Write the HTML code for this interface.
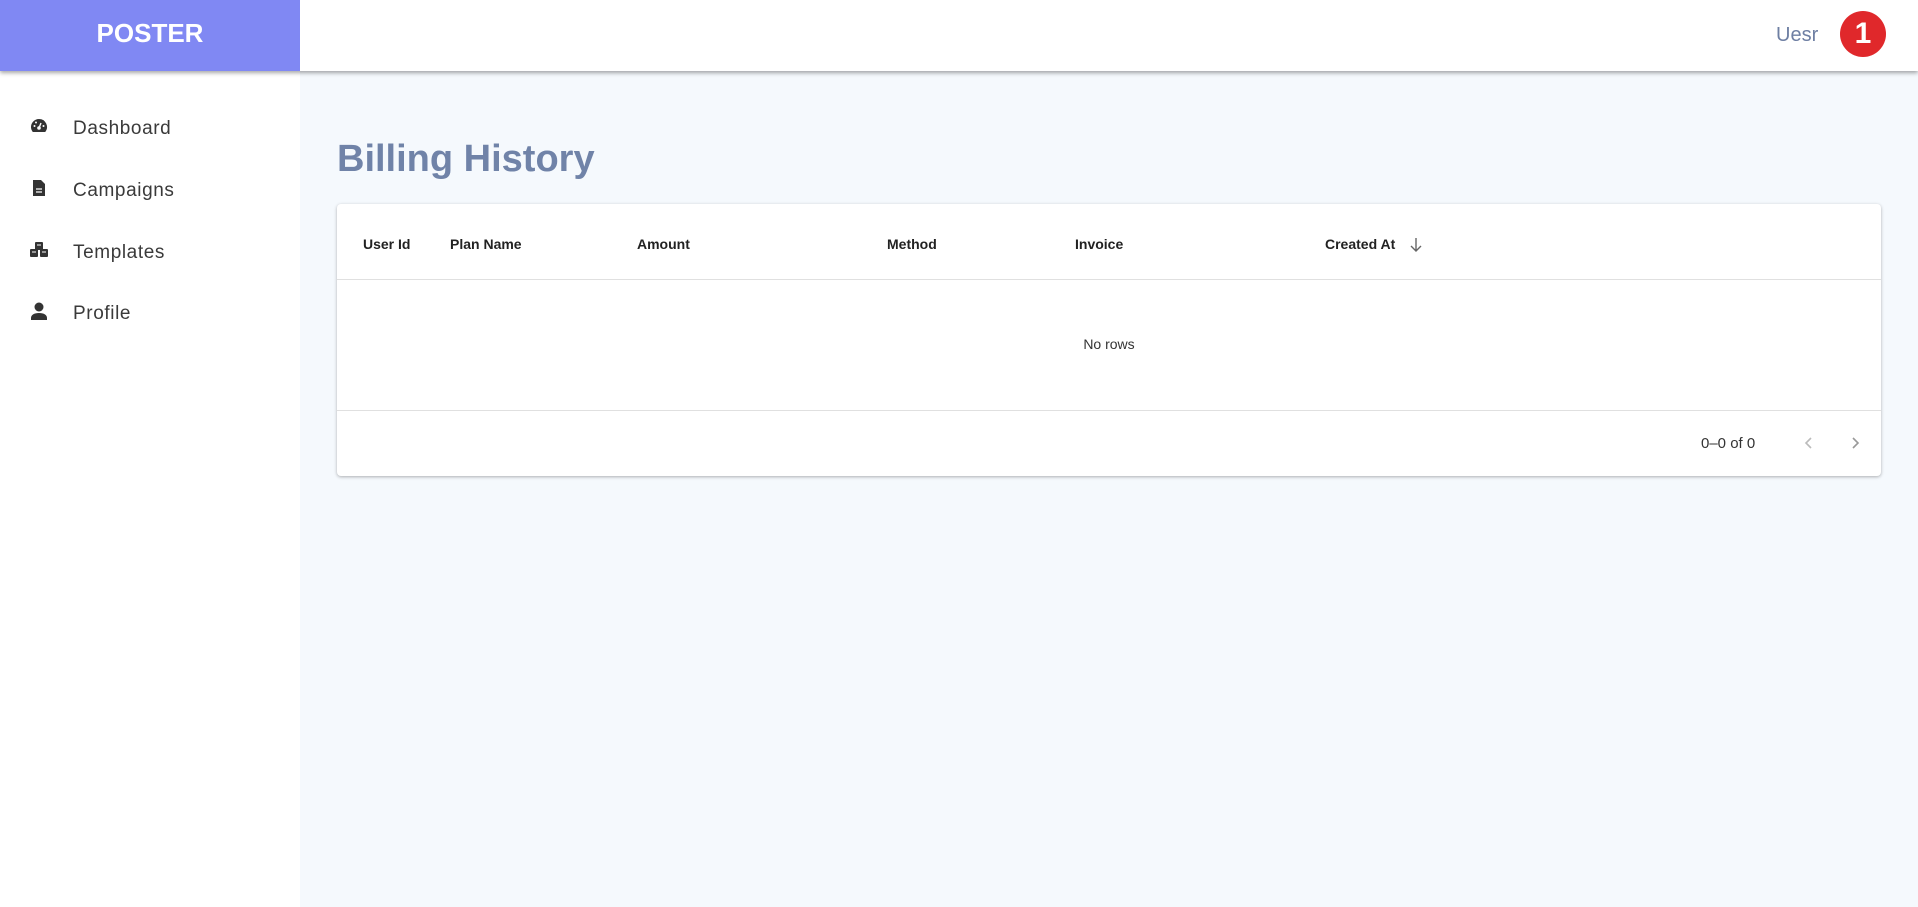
<!DOCTYPE html>
<html><head><meta charset="utf-8"><style>
*{margin:0;padding:0;box-sizing:border-box}
body{width:1918px;height:907px;overflow:hidden;background:#f5f9fd;font-family:"Liberation Sans",sans-serif;position:relative}
.top{position:absolute;left:0;top:0;width:1918px;height:71px;background:#fff;box-shadow:0 2px 4px rgba(0,0,0,.35);z-index:2}
.logo{position:absolute;left:0;top:0;width:300px;height:71px;background:#8088f3;color:#fff;font-weight:bold;font-size:26px;text-align:center;line-height:66px}
.user{position:absolute;left:1776px;top:24px;font-size:20px;color:#6e7fa3}
.badge{position:absolute;left:1840px;top:11px;width:46px;height:46px;border-radius:50%;background:#e0282b;color:#fff;font-weight:bold;font-size:30px;text-align:center;line-height:46px}
.side{position:absolute;left:0;top:71px;width:300px;height:836px;background:#fff}
.nav{position:absolute;left:73px;font-size:19px;color:#3a3a3a;letter-spacing:.6px}
.ic{position:absolute;left:29px;width:20px;height:20px}
h1{position:absolute;left:337px;top:138px;font-size:38px;color:#7083a8;font-weight:bold}
.card{position:absolute;left:337px;top:204px;width:1544px;height:272px;background:#fff;border-radius:4px;box-shadow:0 1px 3px rgba(0,0,0,.3)}
.th{position:absolute;top:32px;font-size:14px;font-weight:bold;color:#222}
.line{position:absolute;left:0;width:100%;height:1px;background:#e0e0e0}
</style></head><body>
<div class="top"><div class="logo">POSTER</div><div class="user">Uesr</div><div class="badge">1</div></div>
<div class="side">
<svg class="ic" style="top:45px" viewBox="0 0 20 20"><path d="M10 3a8 8 0 0 0-8 8c0 2 .7 3.6 1.8 5h12.4A8 8 0 0 0 10 3z" fill="#333"/><circle cx="10" cy="12" r="1.8" fill="#fff"/><path d="M10 12l2-5" stroke="#fff" stroke-width="1.4"/><circle cx="5.5" cy="10" r="1" fill="#fff"/><circle cx="14.5" cy="10" r="1" fill="#fff"/><circle cx="7" cy="6.5" r="1" fill="#fff"/></svg>
<div class="nav" style="top:47px">Dashboard</div>
<svg class="ic" style="top:107px" viewBox="0 0 20 20"><path d="M4 2h8l4 4v12H4z" fill="#333"/><path d="M7 11h6M7 14h6" stroke="#fff" stroke-width="1.3"/></svg>
<div class="nav" style="top:109px">Campaigns</div>
<svg class="ic" style="top:169px" viewBox="0 0 20 20"><rect x="6" y="2" width="8" height="8" rx="1" fill="#333"/><rect x="1" y="9" width="8" height="8" rx="1" fill="#333"/><rect x="11" y="9" width="8" height="8" rx="1" fill="#333"/><path d="M8 5h4M3 12h4M13 12h4" stroke="#fff" stroke-width="1"/></svg>
<div class="nav" style="top:171px">Templates</div>
<svg class="ic" style="top:230px" viewBox="0 0 20 20"><circle cx="10" cy="6" r="4.5" fill="#333"/><path d="M2 19v-2c0-3 3-5 8-5s8 2 8 5v2z" fill="#333"/></svg>
<div class="nav" style="top:232px">Profile</div>
</div>
<h1>Billing History</h1>
<div class="card">
<div class="th" style="left:26px">User Id</div>
<div class="th" style="left:113px">Plan Name</div>
<div class="th" style="left:300px">Amount</div>
<div class="th" style="left:550px">Method</div>
<div class="th" style="left:738px">Invoice</div>
<div class="th" style="left:988px">Created At</div>
<svg style="position:absolute;left:1071px;top:32px" width="16" height="18" viewBox="0 0 16 18"><path d="M8 2v13M3 10l5 5 5-5" stroke="#666" stroke-width="1.4" fill="none"/></svg>
<div class="line" style="top:75px"></div>
<div style="position:absolute;left:0;width:100%;top:132px;text-align:center;font-size:14px;color:#333">No rows</div>
<div class="line" style="top:206px"></div>
<div style="position:absolute;left:1364px;top:231px;font-size:15px;color:#333">0–0 of 0</div>
<svg style="position:absolute;left:1465px;top:231px" width="14" height="16" viewBox="0 0 14 16"><path d="M9 3L4 8l5 5" stroke="#bbb" stroke-width="1.6" fill="none"/></svg>
<svg style="position:absolute;left:1511px;top:231px" width="14" height="16" viewBox="0 0 14 16"><path d="M5 3l5 5-5 5" stroke="#999" stroke-width="1.6" fill="none"/></svg>
</div>
</body></html>
